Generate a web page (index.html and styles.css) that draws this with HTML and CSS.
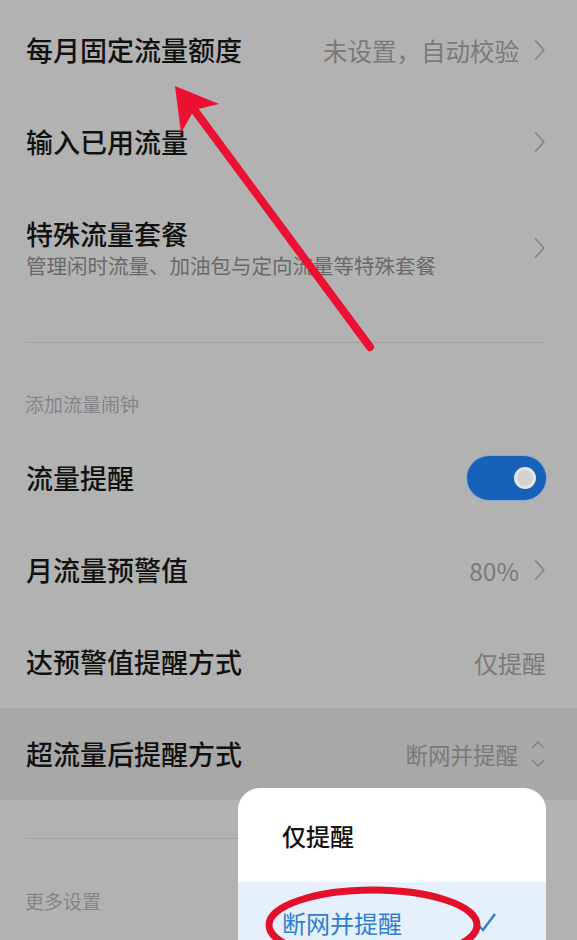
FILE: index.html
```html
<!DOCTYPE html>
<html lang="zh-CN">
<head>
    <meta charset="UTF-8">
    <meta name="viewport" content="width=device-width, initial-scale=1.0">
    <title>流量管理</title>
    <link rel="stylesheet" href="styles.css">
</head>
<body>
    <div class="page">
        <div class="row first">
            <span class="title">每月固定流量额度</span>
            <span class="value">未设置，自动校验</span>
            <svg class="chev" viewBox="0 0 12 22"><path d="M2 2 L10 11 L2 20"/></svg>
        </div>
        <div class="row">
            <span class="title">输入已用流量</span>
            <svg class="chev" viewBox="0 0 12 22"><path d="M2 2 L10 11 L2 20"/></svg>
        </div>
        <div class="row tall">
            <div class="text">
                <span class="title">特殊流量套餐</span>
                <span class="sub">管理闲时流量、加油包与定向流量等特殊套餐</span>
            </div>
            <svg class="chev" viewBox="0 0 12 22"><path d="M2 2 L10 11 L2 20"/></svg>
        </div>

        <div class="divider"></div>
        <div class="section">添加流量闹钟</div>

        <div class="row">
            <span class="title">流量提醒</span>
            <span class="switch"><span class="knob"></span></span>
        </div>
        <div class="row">
            <span class="title">月流量预警值</span>
            <span class="value">80%</span>
            <svg class="chev" viewBox="0 0 12 22"><path d="M2 2 L10 11 L2 20"/></svg>
        </div>
        <div class="row">
            <span class="title">达预警值提醒方式</span>
            <span class="value last">仅提醒</span>
        </div>
        <div class="row active">
            <span class="title">超流量后提醒方式</span>
            <span class="value small">断网并提醒</span>
            <svg class="updown" viewBox="0 0 16 30"><path d="M2 9 L8 3 L14 9 M2 21 L8 27 L14 21"/></svg>
        </div>

        <div class="divider lower"></div>
        <div class="section more">更多设置</div>

        <div class="menu">
            <div class="menu-item">仅提醒</div>
            <div class="menu-item selected">
                断网并提醒
                <svg class="check" viewBox="0 0 24 22"><path d="M3 13 L9 19 L21 3"/></svg>
            </div>
        </div>

        <svg class="marks" viewBox="0 0 577 940">
            <line x1="370" y1="343" x2="190" y2="100"/>
            <polygon points="175,82 219,100 194,106 181,129"/>
            <ellipse cx="373" cy="921" rx="104" ry="35"/>
        </svg>
    </div>
</body>
</html>
```

FILE: styles.css
```css
* {
    box-sizing: border-box;
    margin: 0;
    padding: 0;
}
body {
    background-color: #b2b2b2;
    font-family: "Noto Sans CJK SC", "Noto Sans", sans-serif;
    width: 577px;
    height: 940px;
    overflow: hidden;
}
.page {
    position: relative;
    width: 577px;
    height: 940px;
}
.row {
    display: flex;
    align-items: center;
    height: 92px;
    padding: 0 31px 0 26px;
}
.row.first {
    margin-top: 4px;
}
.row.tall {
    height: 124px;
    padding-bottom: 4px;
}
.row.active {
    background-color: #a8a8a8;
}
.text {
    display: flex;
    flex-direction: column;
    flex: 1;
}
.title {
    flex: 1;
    font-size: 27px;
    font-weight: 500;
    color: #111;
    line-height: 36px;
}
.text .title {
    flex: none;
    line-height: 34px;
}
.sub {
    font-size: 20.5px;
    color: #6a6a6a;
    line-height: 28px;
}
.value {
    font-size: 24.5px;
    color: #7a7a7a;
    margin-right: 14px;
}
.value.last {
    margin-right: 0;
    font-size: 24px;
}
.value.small {
    font-size: 22.5px;
    margin-right: 12px;
}
.chev {
    width: 13px;
    height: 24px;
    fill: none;
    stroke: #858585;
    stroke-width: 1.6;
}
.updown {
    width: 16px;
    height: 30px;
    fill: none;
    stroke: #858585;
    stroke-width: 1.6;
}
.switch {
    width: 79px;
    height: 44px;
    border-radius: 22px;
    background-color: #1762b8;
    box-shadow: 0 0 0 1px #8aa9cc;
    display: flex;
    align-items: center;
    justify-content: flex-end;
    padding-right: 10px;
}
.knob {
    width: 22px;
    height: 22px;
    border-radius: 50%;
    background-color: #d2d2d2;
    border: 3px solid #e6e6e6;
}
.divider {
    margin: 30px 31px 0 25px;
    border-top: 1px solid #a3a3a3;
}
.divider.lower {
    margin-top: 38px;
}
.section {
    font-size: 19px;
    color: #83858a;
    line-height: 24px;
    padding: 49px 26px 16px 25px;
}
.section.more {
    padding-top: 50px;
}
.menu {
    position: absolute;
    left: 238px;
    top: 784px;
    width: 308px;
    height: 170px;
    background-color: #fff;
    border-radius: 22px 22px 0 0;
    overflow: hidden;
}
.menu-item {
    display: flex;
    align-items: center;
    height: 94px;
    padding: 0 44px;
    font-size: 24px;
    font-weight: 500;
    color: #111;
}
.menu-item.selected {
    background-color: #e6f0fa;
    color: #2d7fd2;
    font-weight: 400;
    justify-content: space-between;
    height: 80px;
}
.check {
    width: 24px;
    height: 22px;
    fill: none;
    stroke: #2d7fd2;
    stroke-width: 2.4;
    margin-right: 4px;
}
.marks {
    position: absolute;
    left: 0;
    top: 0;
    width: 577px;
    height: 940px;
    pointer-events: none;
}
.marks line {
    stroke: #ec1032;
    stroke-width: 8;
    stroke-linecap: round;
}
.marks polygon {
    fill: #ec1032;
}
.marks ellipse {
    fill: none;
    stroke: #e3102c;
    stroke-width: 7;
}
```
